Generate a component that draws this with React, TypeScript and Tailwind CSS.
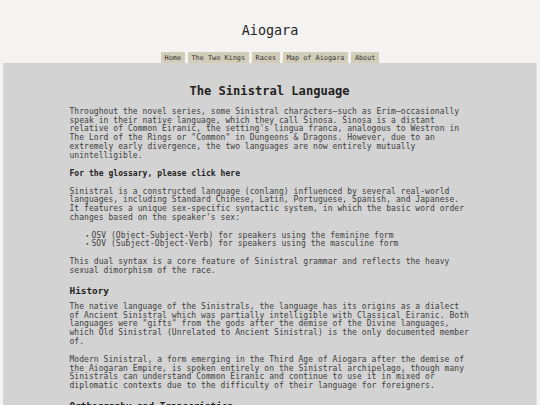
import React from 'react'

const NAV = ['Home', 'The Two Kings', 'Races', 'Map of Aiogara', 'About']

function Para({ children }: { children: React.ReactNode }) {
  return <p className="mb-[9.3px]">{children}</p>
}

function Bullet({ children }: { children: React.ReactNode }) {
  return (
    <li className="flex items-baseline">
      <span className="w-[6px] shrink-0 text-[6px]">•</span>
      <span>{children}</span>
    </li>
  )
}

export default function App() {
  return (
    <div
      className="min-h-[405px] bg-[#f5f3f1] px-[3px] text-[#3d3d3d]"
      style={{ fontFamily: '"DejaVu Sans Mono", "Liberation Mono", monospace' }}
    >
      <header className="flex flex-col items-center pt-[23px]">
        <h1 className="text-[13.4px] leading-[16px] text-[#222]">Aiogara</h1>
        <nav className="mt-[13px] flex gap-[3.5px]">
          {NAV.map((item) => (
            <span
              key={item}
              className="bg-[#d1cdb9] px-[3.5px] pt-[1px] h-[11px] text-[6.85px] leading-[10px] text-[#333]"
            >
              {item}
            </span>
          ))}
        </nav>
      </header>

      <main className="min-h-[400px] bg-[#d3d3d3] border-r border-[#e2e2e2]">
        <div className="mx-auto w-[400px] pt-[21px] text-[8px] leading-[8.7px] tracking-[0.055px]">
          <h2 className="mb-[10px] text-center text-[12.1px] leading-[14px] font-bold tracking-normal text-[#222]">
            The Sinistral Language
          </h2>

          <Para>
            Throughout the novel series, some Sinistral characters—such as Erim—occasionally
            speak in their native language, which they call Šinosa. Šinosa is a distant
            relative of Common Eiranic, the setting's lingua franca, analogous to Westron in
            The Lord of the Rings or "Common" in Dungeons &amp; Dragons. However, due to an
            extremely early divergence, the two languages are now entirely mutually
            unintelligible.
          </Para>

          <Para>
            <b className="text-[#222]">For the glossary, please click here</b>
          </Para>

          <Para>
            Sinistral is a constructed language (conlang) influenced by several real-world
            languages, including Standard Chinese, Latin, Portuguese, Spanish, and Japanese.
            It features a unique sex-specific syntactic system, in which the basic word order
            changes based on the speaker's sex:
          </Para>

          <ul className="mb-[9.3px] pl-[16px]">
            <Bullet>OSV (Object-Subject-Verb) for speakers using the feminine form</Bullet>
            <Bullet>SOV (Subject-Object-Verb) for speakers using the masculine form</Bullet>
          </ul>

          <Para>
            This dual syntax is a core feature of Sinistral grammar and reflects the heavy
            sexual dimorphism of the race.
          </Para>

          <h3 className="mt-[2px] mb-[7px] text-[9.4px] leading-[11px] font-bold tracking-normal text-[#222]">
            History
          </h3>

          <Para>
            The native language of the Sinistrals, the language has its origins as a dialect
            of Ancient Sinistral which was partially intelligible with Classical Eiranic. Both
            languages were "gifts" from the gods after the demise of the Divine languages,
            which Old Sinistral (Unrelated to Ancient Sinistral) is the only documented member
            of.
          </Para>

          <Para>
            Modern Sinistral, a form emerging in the Third Age of Aiogara after the demise of
            the Aiogaran Empire, is spoken entirely on the Sinistral archipelago, though many
            Sinistrals can understand Common Eiranic and continue to use it in mixed or
            diplomatic contexts due to the difficulty of their language for foreigners.
          </Para>

          <h3 className="mt-[3px] mb-[7px] text-[9.4px] leading-[11px] font-bold tracking-normal text-[#222]">
            Orthography and Transcription
          </h3>
        </div>
      </main>
    </div>
  )
}
